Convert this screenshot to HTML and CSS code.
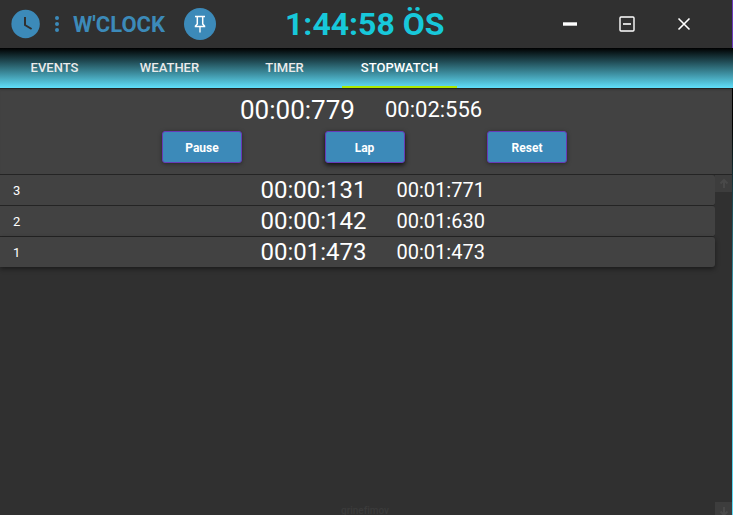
FILE: index.html
```html
<!DOCTYPE html>
<html lang="tr">
<head>
<meta charset="utf-8">
<title>W'CLOCK</title>
<link rel="stylesheet" href="styles.css">
</head>
<body>
<div class="window">
  <header class="titlebar">
    <svg class="clock" viewBox="0 0 28 28"><circle cx="13.600" cy="14" r="14.200" fill="#3c8ab9"/><path d="M13 7v8l6.600 4" fill="none" stroke="#303030" stroke-width="2"/></svg>
    <svg class="dots" viewBox="0 0 4 16" fill="#3c8ab9"><circle cx="2" cy="2" r="2"/><circle cx="2" cy="8" r="2"/><circle cx="2" cy="14" r="2"/></svg>
    <span class="brand">W'CLOCK</span>
    <button class="pin" aria-label="Pin"><svg viewBox="0 0 32 32" fill="none" stroke="#fff"><path d="M11 8.500h10M13.300 9v7l-1.800 2v.5h9V18l-1.800-2V9" stroke-width="1.500"/><path d="M16 19v5.500" stroke-width="1.300"/></svg></button>
    <span class="time">1:44:58 ÖS</span>
    <div class="controls">
      <svg viewBox="0 0 57 48"><path d="M22 24h14" stroke="#fff" stroke-width="3.400"/></svg>
      <svg viewBox="0 0 57 48" fill="none" stroke="#fff" stroke-width="1.400"><rect x="22" y="17" width="14" height="14" rx="1"/><path d="M25 24h8" stroke-width="1.600"/></svg>
      <svg viewBox="0 0 57 48"><path d="M23.500 18.500l11 11m0-11l-11 11" stroke="#fff" stroke-width="1.600"/></svg>
    </div>
  </header>
  <nav class="tabs"><a>EVENTS</a><a>WEATHER</a><a>TIMER</a><a class="active">STOPWATCH</a></nav>
  <section class="panel">
    <div class="times"><span class="lap-time">00:00:779</span><span class="total">00:02:556</span></div>
    <div class="actions"><button>Pause</button><button class="focused">Lap</button><button>Reset</button></div>
  </section>
  <main class="body">
    <div class="laps">
      <div class="row"><span class="num">3</span><span class="lap-time">00:00:131</span><span class="total">00:01:771</span></div>
      <div class="row"><span class="num">2</span><span class="lap-time">00:00:142</span><span class="total">00:01:630</span></div>
      <div class="row"><span class="num">1</span><span class="lap-time">00:01:473</span><span class="total">00:01:473</span></div>
      <footer class="credit">grinefimov</footer>
    </div>
    <div class="scrollbar">
      <span class="arrow"><svg viewBox="0 0 17 17"><path d="M9 13V5M5.500 8.500L9 5l3.500 3.500"/></svg></span>
      <span class="arrow"><svg viewBox="0 0 17 17"><path d="M9 5v8M5.500 9.500L9 13l3.500-3.500"/></svg></span>
    </div>
  </main>
</div>
</body>
</html>
```

FILE: styles.css
```css
* { box-sizing: border-box; }
body {
  margin: 0;
  height: 515px;
  overflow: hidden;
  font-family: Roboto, "Liberation Sans", sans-serif;
  color: #fff;
  background: linear-gradient(#673ab7 0 48px, #000 48px 125px, #40a4b8 300px, #60dffa 515px);
}
.window { width: 732px; height: 515px; display: flex; flex-direction: column; background: #303030; }
.titlebar { height: 48px; flex: none; display: flex; align-items: center; }
.clock { width: 28px; height: 28px; margin-left: 12px; overflow: visible; }
.dots { width: 4px; height: 16px; margin-left: 15px; }
.brand { width: 111px; padding-left: 14px; font-size: 22px; font-weight: 700; color: #3c8ab9; white-space: nowrap; }
.pin { width: 32px; height: 32px; padding: 0; margin-left: 14px; border: 0; border-radius: 50%; background: #3c8ab9; }
.pin svg { display: block; width: 32px; height: 32px; }
.time { width: 170px; margin-left: 69px; font-size: 32px; line-height: 48px; font-weight: 700; color: #17c8da; white-space: nowrap; }
.controls { display: flex; margin-left: 86px; }
.controls svg { width: 57px; height: 48px; display: block; }
.tabs { width: 733px; height: 40px; flex: none; display: flex; background: linear-gradient(#000, #60dffa); }
.tabs a { width: 115px; padding-right: 6px; line-height: 40px; text-align: center; font-size: 13px; font-weight: 500; color: #ebebeb; }
.tabs .active { color: #fff; border-bottom: 2px solid #aeea00; padding-right: 0; margin-left: -3px; }
.panel { height: 87px; flex: none; background: #424242; border-bottom: 1px solid #242424; box-shadow: inset 0 1px 0 #242424, inset 0 3px 2px -1px #383838; }
.times { display: flex; align-items: center; height: 43px; padding-left: 240px; }
.times .lap-time { width: 145px; font-size: 26px; }
.times .total { font-size: 22px; }
.actions { display: flex; gap: 82.5px; padding-left: 162px; }
.actions button { width: 80px; height: 32px; padding: 1px 0 0; border: 1px solid #673ab7; border-radius: 3px; background: #3c8ab9; color: #fff; font: 700 12px Roboto, sans-serif; box-shadow: 0 1px 4px rgba(0, 0, 0, .4); }
.actions .focused { box-shadow: 0 2px 5px rgba(0, 0, 0, .8); }
.body { flex: 1; display: flex; min-height: 0; }
.laps { width: 715px; display: flex; flex-direction: column; }
.row { height: 31px; flex: none; display: flex; align-items: center; background: #424242; border-bottom: 1px solid #242424; border-radius: 0 3px 3px 0; }
.row:nth-child(3) { height: 30px; border-bottom: 0; box-shadow: 0 2px 5px rgba(0, 0, 0, .45); }
.row .num { width: 260.5px; padding-left: 13px; font-size: 13px; }
.row .lap-time { width: 136px; font-size: 24px; }
.row .total { font-size: 20px; }
.credit { margin-top: auto; padding-left: 341px; height: 11px; font-size: 10px; line-height: 13px; font-weight: 500; color: #3b3b3b; overflow: hidden; }
.scrollbar { width: 17px; display: flex; flex-direction: column; justify-content: space-between; }
.arrow { height: 17px; background: #3d3d3d; overflow: hidden; }
.arrow:last-child { height: 13px; }
.arrow svg { display: block; width: 17px; height: 17px; fill: none; stroke: #494949; stroke-width: 2; }
```
